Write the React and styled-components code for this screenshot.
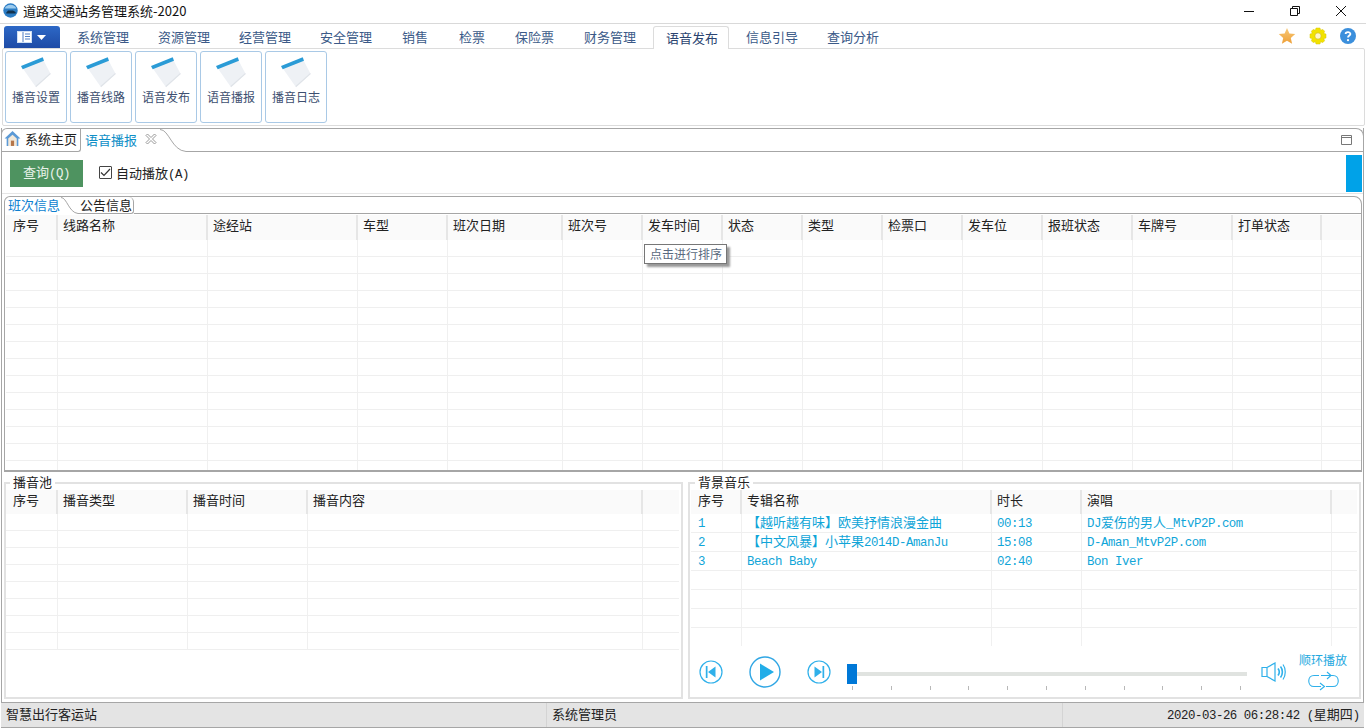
import styled, { createGlobalStyle } from 'styled-components'

const cjk = '"Noto Sans CJK SC", "Liberation Sans", sans-serif'
const mono = '"Liberation Mono", "Noto Sans CJK SC", monospace'

const menus = [
  { label: '系统管理', width: 81 },
  { label: '资源管理', width: 81 },
  { label: '经营管理', width: 81 },
  { label: '安全管理', width: 82 },
  { label: '销售', width: 57 },
  { label: '检票', width: 56 },
  { label: '保险票', width: 69 },
  { label: '财务管理', width: 81 },
  { label: '语音发布', width: 76, active: true },
  { label: '信息引导', width: 81 },
  { label: '查询分析', width: 81 },
]

const ribbonItems = ['播音设置', '播音线路', '语音发布', '语音播报', '播音日志']

const scheduleCols = [
  ['序号', 52],
  ['线路名称', 150],
  ['途经站', 150],
  ['车型', 90],
  ['班次日期', 115],
  ['班次号', 80],
  ['发车时间', 80],
  ['状态', 80],
  ['类型', 80],
  ['检票口', 80],
  ['发车位', 80],
  ['报班状态', 90],
  ['车牌号', 100],
  ['打单状态', 89],
]

const poolCols = [
  ['序号', 52],
  ['播音类型', 130],
  ['播音时间', 120],
  ['播音内容', 335],
]

const musicCols = [
  ['序号', 51],
  ['专辑名称', 250],
  ['时长', 90],
  ['演唱', 250],
]

const Latin = styled.span`
  font-family: ${mono};
  font-size: 12.4px;
  letter-spacing: -0.45px;
`

const musicRows = [
  [
    <Latin>1</Latin>,
    <>【越听越有味】欧美抒情浪漫金曲</>,
    <Latin>00:13</Latin>,
    <>
      <Latin>DJ</Latin>爱伤的男人<Latin>_MtvP2P.com</Latin>
    </>,
  ],
  [
    <Latin>2</Latin>,
    <>
      【中文风暴】小苹果<Latin>2014D-AmanJu</Latin>
    </>,
    <Latin>15:08</Latin>,
    <Latin>D-Aman_MtvP2P.com</Latin>,
  ],
  [
    <Latin>3</Latin>,
    <Latin>Beach Baby</Latin>,
    <Latin>02:40</Latin>,
    <Latin>Bon Iver</Latin>,
  ],
]

const DataGrid = ({ cols, rows = [], rowCount, rowHeight, headerHeight = 24 }) => (
  <GridBox>
    <HeaderRow $h={headerHeight}>
      {cols.map(([title, width]) => (
        <HeaderCell key={title} $w={width}>
          {title}
        </HeaderCell>
      ))}
      <Filler />
    </HeaderRow>
    {Array.from({ length: rowCount }).map((_, r) => (
      <BodyRow key={r} $h={rowHeight}>
        {cols.map(([title, width], c) => (
          <BodyCell key={title} $w={width}>
            {rows[r] && rows[r][c]}
          </BodyCell>
        ))}
        <Filler />
      </BodyRow>
    ))}
  </GridBox>
)

const NoteIcon = () => (
  <svg width="32" height="32" viewBox="0 0 32 32">
    <polygon points="2.7,11.3 23.3,3 30.7,17 16,30.3" fill="#eef1f5" />
    <polygon points="16,30.3 30.7,17 30.2,16 15.6,29" fill="#dfe3e8" />
    <polygon points="1,9 22.7,0.3 24,3.7 2.7,12.3" fill="#2a9bd6" />
  </svg>
)

const AppLogo = () => (
  <svg width="15" height="15" viewBox="0 0 15 15">
    <circle cx="7.5" cy="7.5" r="7.2" fill="#2b7cc4" />
    <path d="M1.6 5.5 A6.5 6.5 0 0 1 13.4 5.5 Z" fill="#9ccbee" />
    <path d="M3 10 L5 7.5 H10 L12.6 8.9 V10.6 H3.5 Z" fill="#12324f" />
  </svg>
)

const WindowButtons = () => (
  <WindowControls>
    <svg width="12" height="12" viewBox="0 0 12 12">
      <path d="M1 6.5 H11" stroke="#111" fill="none" />
    </svg>
    <svg width="12" height="12" viewBox="0 0 12 12">
      <path d="M1.5 3.5 H8.5 V10.5 H1.5 Z M3.5 3.5 V1.5 H10.5 V8.5 H8.5" stroke="#111" fill="none" />
    </svg>
    <svg width="12" height="12" viewBox="0 0 12 12">
      <path d="M1 1 L11 11 M11 1 L1 11" stroke="#111" fill="none" />
    </svg>
  </WindowControls>
)

const PanelsIcon = () => (
  <svg width="30" height="12" viewBox="0 0 30 12">
    <rect x="0.5" y="0.5" width="14" height="11" fill="#fff" stroke="#cfe0f5" />
    <path d="M6 1 V11 M8 3 H13 M8 5.5 H13 M8 8 H13" stroke="#4f7fc4" fill="none" />
    <path d="M20 4 H29 L24.5 9 Z" fill="#fff" />
  </svg>
)

const StarIcon = () => (
  <svg width="18" height="18" viewBox="0 0 18 18">
    <defs>
      <linearGradient id="star" x1="0" y1="0" x2="0" y2="1">
        <stop offset="0" stopColor="#f7c979" />
        <stop offset="1" stopColor="#ee9f36" />
      </linearGradient>
    </defs>
    <polygon points="9,1 11.4,6.4 17.2,7 12.8,10.9 14.1,16.8 9,13.8 3.9,16.8 5.2,10.9 0.8,7 6.6,6.4" fill="url(#star)" />
  </svg>
)

const GearIcon = () => (
  <svg width="18" height="18" viewBox="0 0 18 18">
    <path
      d="M7 1 H11 L11.6 3.2 L13.8 2.4 L15.6 4.2 L14.8 6.4 L17 7 V11 L14.8 11.6 L15.6 13.8 L13.8 15.6 L11.6 14.8 L11 17 H7 L6.4 14.8 L4.2 15.6 L2.4 13.8 L3.2 11.6 L1 11 V7 L3.2 6.4 L2.4 4.2 L4.2 2.4 L6.4 3.2 Z"
      fill="#f2e200"
      stroke="#d6c400"
      strokeWidth="0.5"
    />
    <circle cx="9" cy="9" r="3.2" fill="#fff6c8" stroke="#c8b400" strokeWidth="0.6" />
  </svg>
)

const HelpIcon = () => (
  <svg width="16" height="16" viewBox="0 0 16 16">
    <circle cx="8" cy="8" r="8" fill="#3b8fdc" />
    <path d="M5.6 6 C5.6 3.6 10.4 3.6 10.4 6 C10.4 7.6 8 7.6 8 9.6" stroke="#fff" strokeWidth="1.8" fill="none" />
    <circle cx="8" cy="12.2" r="1.1" fill="#fff" />
  </svg>
)

const HomeIcon = () => (
  <svg width="17" height="17" viewBox="0 0 16 16">
    <path d="M8 1 L15.5 8 L13.5 8 V15 H2.5 V8 L0.5 8 Z" fill="#5c9ad6" />
    <path d="M4 8 L8 4.4 L12 8 V15 H4 Z" fill="#f3e9da" />
    <rect x="6.5" y="10" width="3" height="5" fill="#b5764a" />
  </svg>
)

const CloseCross = () => (
  <svg width="12" height="12" viewBox="0 0 12 12">
    <path
      d="M1 2.5 L2.5 1 L6 4.5 L9.5 1 L11 2.5 L7.5 6 L11 9.5 L9.5 11 L6 7.5 L2.5 11 L1 9.5 L4.5 6 Z"
      fill="#fff"
      stroke="#999"
    />
  </svg>
)

const RestoreIcon = () => (
  <svg width="11" height="10" viewBox="0 0 11 10">
    <path d="M0.5 0.5 H10.5 V9.5 H0.5 Z" stroke="#777" fill="none" />
    <path d="M0.5 2.5 H10.5" stroke="#777" fill="none" />
  </svg>
)

const TabCurve = ({ width, height }) => (
  <CurveSvg width={width} height={height} viewBox={`0 0 ${width} ${height}`} preserveAspectRatio="none">
    <path
      d={`M0 0.5 C${width * 0.35} 0.5 ${width * 0.45} ${height - 1.5} ${width} ${height - 0.5}`}
      stroke="#a6a6a6"
      fill="none"
    />
  </CurveSvg>
)

const SkipIcon = ({ next }) => (
  <svg width="24" height="24" viewBox="0 0 24 24">
    <circle cx="12" cy="12" r="11" fill="none" stroke="#2fb0ea" strokeWidth="1.2" />
    {next ? (
      <path d="M7.5 6.5 L15 12 L7.5 17.5 Z M15.5 6 H17.2 V18 H15.5 Z" fill="#2fb0ea" />
    ) : (
      <path d="M16.5 6.5 L9 12 L16.5 17.5 Z M6.8 6 H8.5 V18 H6.8 Z" fill="#2fb0ea" />
    )}
  </svg>
)

const PlayIcon = () => (
  <svg width="32" height="32" viewBox="0 0 32 32">
    <circle cx="16" cy="16" r="15" fill="none" stroke="#2fa6e4" strokeWidth="1.4" />
    <path d="M11 7.5 L25 16 L11 24.5 Z" fill="#22ade8" />
  </svg>
)

const SpeakerIcon = () => (
  <svg width="25" height="20" viewBox="0 0 25 20" fill="none" stroke="#2fb0ea" strokeWidth="1.2">
    <path d="M1 5.5 H6 V14.5 H1 Z M6 5.5 L14 1 V19 L6 14.5" />
    <path d="M17 6.5 C18.5 8.5 18.5 11.5 17 13.5" strokeWidth="1.6" />
    <path d="M19.5 4.5 C22 7.5 22 12.5 19.5 15.5" strokeWidth="1.6" />
    <path d="M22 2.5 C25 6.5 25 13.5 22 17.5" />
  </svg>
)

const LoopIcon = () => (
  <svg width="33" height="20" viewBox="0 0 33 20" fill="none" stroke="#2fb0ea" strokeWidth="1.1">
    <path d="M14 4.5 H26 C33 4.5 33 15.5 26 15.5 H19" />
    <path d="M14 15.5 H7 C0 15.5 0 4.5 7 4.5 H12" />
    <path d="M20 1 L24 4.5 L20 8" />
    <path d="M13 12 L17.5 15.5 L13 19" />
  </svg>
)

const App = () => (
  <Page>
    <GlobalStyle />
    <TitleBar>
      <AppLogo />
      <AppTitle>道路交通站务管理系统-2020</AppTitle>
      <WindowButtons />
    </TitleBar>

    <MenuRow>
      <MenuButton>
        <PanelsIcon />
      </MenuButton>
      {menus.map(({ label, width, active }) => (
        <MenuTab key={label} $w={width} $active={active}>
          {label}
        </MenuTab>
      ))}
      <MenuIcons>
        <StarIcon />
        <GearIcon />
        <HelpIcon />
      </MenuIcons>
    </MenuRow>

    <Ribbon>
      {ribbonItems.map((label) => (
        <RibbonButton key={label}>
          <NoteIcon />
          <RibbonLabel>{label}</RibbonLabel>
        </RibbonButton>
      ))}
    </Ribbon>

    <DocPanel>
      <DocStrip>
        <HomeTab>
          <HomeIcon />
          系统主页
        </HomeTab>
        <DocTab>
          语音播报
          <CloseCross />
        </DocTab>
        <TabCurve width={26} height={23} />
        <StripRest>
          <RestoreIcon />
        </StripRest>
      </DocStrip>

      <Toolbar>
        <QueryButton>
          查询<Latin>(Q)</Latin>
        </QueryButton>
        <AutoPlay>
          <CheckBox>
            <svg width="11" height="9" viewBox="0 0 11 9">
              <path d="M1 4.5 L4 7.5 L10 1" stroke="#333" strokeWidth="1.2" fill="none" />
            </svg>
          </CheckBox>
          <span>
            自动播放<Latin>(A)</Latin>
          </span>
        </AutoPlay>
        <BlueBlock />
      </Toolbar>

      <SchedulePanel>
        <InnerStrip>
          <InnerTab>班次信息</InnerTab>
          <TabCurve width={17} height={17} />
          <NoticeTab>公告信息</NoticeTab>
          <InnerRest />
        </InnerStrip>
        <DataGrid cols={scheduleCols} rowCount={14} rowHeight={17} headerHeight={25} />
        <Tooltip>点击进行排序</Tooltip>
      </SchedulePanel>

      <BottomRow>
        <GroupBox $w={679} $pad={0}>
          <GroupTitle>播音池</GroupTitle>
          <DataGrid cols={poolCols} rowCount={8} rowHeight={17} />
        </GroupBox>
        <GroupBox $w={673} $pad={1}>
          <GroupTitle>背景音乐</GroupTitle>
          <MusicBody>
            <DataGrid cols={musicCols} rows={musicRows} rowCount={7} rowHeight={19} />
          </MusicBody>
          <Player>
            <Transport>
              <SkipIcon />
              <PlayIcon />
              <SkipIcon next />
            </Transport>
            <Slider>
              <SliderTrack />
              <SliderThumb />
              <Ticks>
                {Array.from({ length: 11 }).map((_, i) => (
                  <Tick key={i} />
                ))}
              </Ticks>
            </Slider>
            <SpeakerBox>
              <SpeakerIcon />
            </SpeakerBox>
            <LoopBox>
              <LoopLabel>顺环播放</LoopLabel>
              <LoopIcon />
            </LoopBox>
          </Player>
        </GroupBox>
      </BottomRow>
    </DocPanel>

    <StatusBar>
      <StatusCell $w={546}>智慧出行客运站</StatusCell>
      <StatusCell $w={516}>系统管理员</StatusCell>
      <StatusClock>
        <Latin>2020-03-26 06:28:42 (</Latin>星期四<Latin>)</Latin>
      </StatusClock>
    </StatusBar>
  </Page>
)

export default App

const GlobalStyle = createGlobalStyle`
  html, body {
    margin: 0;
    padding: 0;
    background: #fff;
  }
  * {
    box-sizing: border-box;
  }
`

const Page = styled.div`
  width: 1366px;
  height: 728px;
  overflow: hidden;
  display: flex;
  flex-direction: column;
  font-family: ${cjk};
  font-size: 13px;
  color: #222;
  background: #fff;
`

const TitleBar = styled.div`
  flex: 0 0 24px;
  display: flex;
  align-items: center;
  padding: 0 0 2px 3px;
  border-bottom: 1px solid #d9d9d9;
`

const AppTitle = styled.div`
  margin-left: 5px;
  font-size: 13px;
  color: #111;
`

const WindowControls = styled.div`
  margin-left: auto;
  display: flex;
  gap: 34px;
  padding-right: 19px;
  align-items: center;
`

const MenuRow = styled.div`
  flex: 0 0 24px;
  display: flex;
  align-items: flex-end;
  padding-left: 4px;
`

const MenuButton = styled.div`
  width: 56px;
  height: 22px;
  margin-right: 2.5px;
  display: flex;
  align-items: center;
  justify-content: center;
  border-radius: 3px 3px 0 0;
  background: linear-gradient(#2d68c6, #1e4ba6);
`

const MenuTab = styled.div`
  width: ${(p) => p.$w}px;
  height: ${(p) => (p.$active ? 23 : 22)}px;
  margin: ${(p) => (p.$active ? '0 2.5px -1px' : '0')};
  padding-left: ${(p) => (p.$active ? 12 : 14.5)}px;
  line-height: 22px;
  white-space: nowrap;
  color: ${(p) => (p.$active ? '#2b4470' : '#3b5a88')};
  background: #fff;
  position: relative;
  z-index: 1;
  border: ${(p) => (p.$active ? '1px solid #dcdcdc' : 'none')};
  border-bottom: none;
  border-radius: 3px 3px 0 0;
`

const MenuIcons = styled.div`
  margin-left: auto;
  display: flex;
  align-items: center;
  gap: 13px;
  padding: 0 10px 3px 0;
`

const Ribbon = styled.div`
  flex: 0 0 77px;
  margin: 0 1px 2px 2px;
  padding: 2px;
  display: flex;
  gap: 3px;
  border: 1px solid #dcdcdc;
  border-radius: 2px;
`

const RibbonButton = styled.div`
  width: 62px;
  height: 72px;
  display: flex;
  flex-direction: column;
  align-items: center;
  padding-top: 5px;
  border: 1px solid #a9c9e6;
  border-radius: 3px;
`

const RibbonLabel = styled.div`
  font-size: 12px;
  line-height: 16px;
  color: #3d4f70;
`

const DocPanel = styled.div`
  flex: 1;
  min-height: 0;
  margin: 0 2px 0 1px;
  display: flex;
  flex-direction: column;
  border-left: 1px solid #a6a6a6;
  border-right: 1px solid #a6a6a6;
`

const DocStrip = styled.div`
  flex: 0 0 24px;
  margin: 0 -1px;
  display: flex;
  border: 1px solid #a6a6a6;
  border-bottom: none;
  border-radius: 6px 8px 0 0;
`

const HomeTab = styled.div`
  width: 79px;
  display: flex;
  align-items: center;
  gap: 4px;
  padding: 0 0 3px 2px;
  border-right: 1px solid #a6a6a6;
  border-bottom: 1px solid #a6a6a6;
  border-radius: 0 0 3px 0;
  color: #222;
`

const DocTab = styled.div`
  width: 79px;
  display: flex;
  align-items: center;
  gap: 8px;
  padding: 0 0 3px 4px;
  color: #0f8fc7;
`

const CurveSvg = styled.svg`
  flex: none;
  display: block;
`

const StripRest = styled.div`
  flex: 1;
  display: flex;
  align-items: center;
  justify-content: flex-end;
  padding-right: 11px;
  border-bottom: 1px solid #a6a6a6;
`

const Toolbar = styled.div`
  flex: 0 0 42px;
  display: flex;
  align-items: center;
  padding: 1px 1px 0 8px;
  border-bottom: 1px solid #e6e6e6;
`

const QueryButton = styled.div`
  width: 73px;
  height: 27px;
  line-height: 23px;
  text-align: center;
  color: #e9f2ea;
  background: #4e9360;
`

const AutoPlay = styled.div`
  margin-left: 16px;
  padding-bottom: 2px;
  display: flex;
  align-items: center;
  color: #222;
`

const CheckBox = styled.div`
  width: 13px;
  height: 13px;
  margin-right: 4px;
  display: flex;
  align-items: center;
  justify-content: center;
  border: 1px solid #444;
  border-radius: 1px;
`

const BlueBlock = styled.div`
  width: 16px;
  height: 37px;
  margin-left: auto;
  background: #00a2e8;
`

const SchedulePanel = styled.div`
  flex: 0 0 276px;
  min-height: 0;
  margin: 2px 1px 0 2px;
  padding-left: 1px;
  position: relative;
  display: flex;
  flex-direction: column;
  border: 1px solid #a6a6a6;
  border-bottom: 2px solid #a6a6a6;
  border-radius: 6px 8px 0 0;
`

const InnerStrip = styled.div`
  flex: 0 0 17px;
  margin-bottom: 1px;
  display: flex;
`

const InnerTab = styled.div`
  padding-left: 2px;
  width: 55px;
  line-height: 15px;
  color: #0d7fd0;
`

const NoticeTab = styled.div`
  width: 56px;
  padding-left: 2px;
  line-height: 15px;
  white-space: nowrap;
  color: #222;
  border-right: 1px solid #a6a6a6;
  border-bottom: 1px solid #a6a6a6;
  border-radius: 0 5px 3px 0;
`

const InnerRest = styled.div`
  flex: 1;
  border-bottom: 1px solid #a6a6a6;
`

const Tooltip = styled.div`
  position: absolute;
  left: 639px;
  top: 47px;
  width: 83px;
  height: 20px;
  padding-left: 5px;
  line-height: 17px;
  font-size: 12px;
  color: #5a6a80;
  background: #fff;
  border: 1px solid #777;
  box-shadow: 3px 3px 2px #999;
`

const GridBox = styled.div`
  flex: 1;
  min-height: 0;
  overflow: hidden;
`

const HeaderRow = styled.div`
  display: flex;
  height: ${(p) => p.$h}px;
  background: #fafafa;
`

const HeaderCell = styled.div`
  flex: 0 0 ${(p) => p.$w}px;
  padding-left: 5px;
  line-height: 20px;
  color: #222;
  border-right: 2px solid #e6e6e6;

  &:first-child {
    padding-left: 7px;
  }
`

const Filler = styled.div`
  flex: 1;
`

const BodyRow = styled.div`
  display: flex;
  height: ${(p) => p.$h}px;
  border-bottom: 1px solid #efefef;
`

const BodyCell = styled.div`
  flex: 0 0 ${(p) => p.$w}px;
  padding-left: 5px;
  line-height: 16px;
  white-space: nowrap;
  color: #10a5d8;
  border-right: 1px solid #f0f0f0;

  &:first-child {
    padding-left: 7px;
  }
`

const BottomRow = styled.div`
  flex: 1;
  min-height: 0;
  display: flex;
  gap: 5px;
  padding: 3px 0 3px 2px;
`

const GroupBox = styled.fieldset`
  flex: 0 0 ${(p) => p.$w}px;
  min-width: 0;
  margin: 0;
  padding: 0 2px 0 ${(p) => p.$pad}px;
  display: flex;
  flex-direction: column;
  border: 2px solid #e2e2e2;
`

const GroupTitle = styled.legend`
  margin-left: 4px;
  padding: 0 3px 1px;
  line-height: 14px;
  font-size: 13px;
  color: #222;
`

const MusicBody = styled.div`
  height: 156px;
  display: flex;
`

const Player = styled.div`
  flex: 1;
  display: flex;
  align-items: center;
  padding-left: 8px;
`

const Transport = styled.div`
  display: flex;
  align-items: center;
  gap: 26px;
`

const Slider = styled.div`
  position: relative;
  width: 400px;
  height: 36px;
  margin-left: 16px;
`

const SliderTrack = styled.div`
  position: absolute;
  left: 0;
  right: 0;
  top: 18px;
  height: 4px;
  background: #e0e3e0;
`

const SliderThumb = styled.div`
  position: absolute;
  left: 0;
  top: 10px;
  width: 10px;
  height: 20px;
  background: #0078d7;
`

const Ticks = styled.div`
  position: absolute;
  left: 5px;
  right: 6px;
  top: 32px;
  display: flex;
  justify-content: space-between;
`

const Tick = styled.div`
  width: 1px;
  height: 4px;
  background: #b8b8b8;
`

const SpeakerBox = styled.div`
  margin-left: 14px;
  display: flex;
`

const LoopBox = styled.div`
  margin-left: 13px;
  display: flex;
  flex-direction: column;
  align-items: center;
  gap: 4px;
`

const LoopLabel = styled.div`
  font-size: 12px;
  line-height: 15px;
  color: #22a8e0;
`

const StatusBar = styled.div`
  flex: 0 0 26px;
  display: flex;
  align-items: center;
  margin: 0 2px 0 1px;
  border-top: 1px solid #a6a6a6;
  border-bottom: 1px solid #a6a6a6;
  background: #e4e4e4;
`

const StatusCell = styled.div`
  flex: 0 0 ${(p) => p.$w}px;
  padding-left: 5px;
  height: 24px;
  line-height: 22px;
  border-right: 1px solid #d4d4d4;
  color: #222;
`

const StatusClock = styled.div`
  flex: 1;
  padding-left: 104px;
  line-height: 22px;
  white-space: nowrap;
  color: #222;
`
